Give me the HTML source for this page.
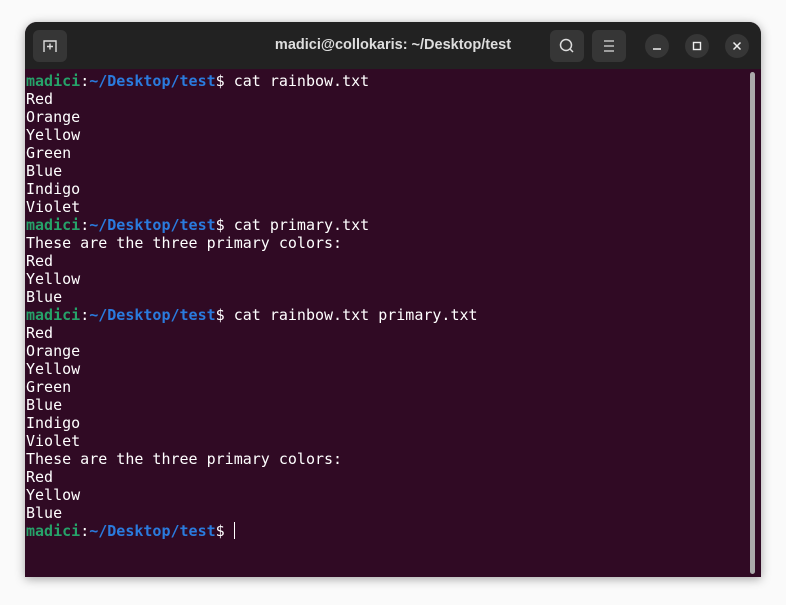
<!DOCTYPE html>
<html><head><style>
body{margin:0;width:786px;height:605px;background:#fafafa;position:relative;overflow:hidden}
.win{position:absolute;left:25px;top:22px;width:736px;height:555px;background:#300a24;border-radius:12px 12px 0 0;box-shadow:0 2px 10px rgba(0,0,0,.35);overflow:hidden}
.tb{position:absolute;left:0;top:0;width:736px;height:47px;background:#222222}
.btn{position:absolute;top:8px;width:34px;height:32px;background:#363636;border-radius:6px}
.cir{position:absolute;top:12px;width:24px;height:24px;background:#363636;border-radius:50%}
.title{position:absolute;top:0;left:0;width:736px;text-align:center;font:bold 14.5px "Liberation Sans",sans-serif;line-height:47px;color:#dedede}
pre{position:absolute;left:1px;top:50px;margin:0;font:15px/18px "DejaVu Sans Mono",monospace;color:#fff}
.g{color:#26a269;font-weight:bold}.b{color:#2a7bde;font-weight:bold}
.sb{position:absolute;left:725px;top:50px;width:5px;height:502px;background:#aaa;border-radius:3px}
.cur{display:inline-block;width:1px;height:17px;background:#fff;vertical-align:-3px}
</style></head><body>
<div class="win">
<div class="tb">
<div class="btn" style="left:8px"><svg width="34" height="32"><path d="M11 22V11H23V22M14 16.5H20M17 13.5V19.5" stroke="#ddd" stroke-width="1.4" fill="none"/></svg></div>
<div class="title">madici@collokaris: ~/Desktop/test</div>
<div class="btn" style="left:525px"><svg width="34" height="32"><circle cx="16" cy="15" r="5.5" stroke="#ddd" stroke-width="1.5" fill="none"/><path d="M20 19L23 22" stroke="#ddd" stroke-width="1.5"/></svg></div>
<div class="btn" style="left:567px"><svg width="34" height="32"><path d="M12 11H22M12 16H22M12 21H22" stroke="#ddd" stroke-width="1.3"/></svg></div>
<div class="cir" style="left:620px"><svg width="24" height="24"><path d="M8 15H16" stroke="#eee" stroke-width="1.5"/></svg></div>
<div class="cir" style="left:660px"><svg width="24" height="24"><rect x="8.5" y="8.5" width="7" height="7" stroke="#eee" stroke-width="1.4" fill="none"/></svg></div>
<div class="cir" style="left:700px"><svg width="24" height="24"><path d="M8.5 8.5L15.5 15.5M15.5 8.5L8.5 15.5" stroke="#eee" stroke-width="1.5"/></svg></div>
</div>
<pre><span class="g">madici</span>:<span class="b">~/Desktop/test</span>$ cat rainbow.txt
Red
Orange
Yellow
Green
Blue
Indigo
Violet
<span class="g">madici</span>:<span class="b">~/Desktop/test</span>$ cat primary.txt
These are the three primary colors:
Red
Yellow
Blue
<span class="g">madici</span>:<span class="b">~/Desktop/test</span>$ cat rainbow.txt primary.txt
Red
Orange
Yellow
Green
Blue
Indigo
Violet
These are the three primary colors:
Red
Yellow
Blue
<span class="g">madici</span>:<span class="b">~/Desktop/test</span>$ <span class="cur"></span></pre>
<div class="sb"></div>
</div>
</body></html>
